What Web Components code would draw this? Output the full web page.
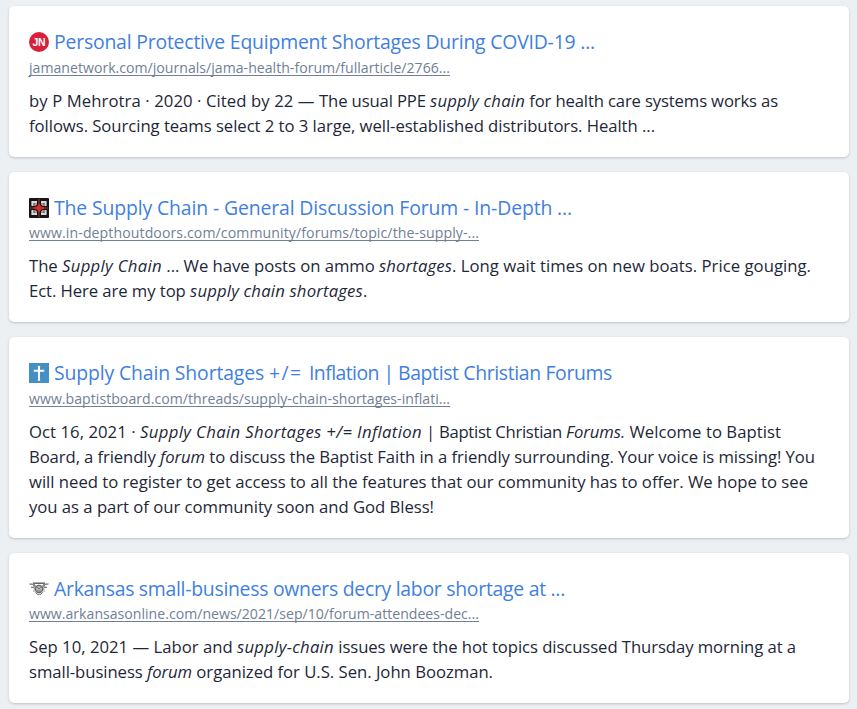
<!DOCTYPE html>
<html lang="en">
<head>
<meta charset="utf-8">
<title>Search results</title>
<style>
html{background:#ecf0f3}
body{margin:0;height:709px;overflow:hidden;background:#ecf0f3;font-family:"Open Sans","Noto Sans",sans-serif;font-weight:400;color:#1e2738}
</style>
</head>
<body>
<results-list>
  <result-card>
    <svg slot="icon" width="20" height="20" viewBox="0 0 20 20"><circle cx="10" cy="10" r="10" fill="#d9203b"/><text x="10" y="14" text-anchor="middle" font-family="Liberation Sans" font-size="10.5" font-weight="700" fill="#fff" textLength="13">JN</text></svg>
    <text-run slot="title" w="541">Personal Protective Equipment Shortages During COVID-19 ...</text-run>
    <text-run slot="url" w="421">jamanetwork.com/journals/jama-health-forum/fullarticle/2766...</text-run>
    <text-line><text-run w="290">by P Mehrotra · 2020 · Cited by 22 — </text-run><text-run w="111">The usual PPE </text-run><text-run italic w="95">supply chain</text-run><text-run w="253"> for health care systems works as</text-run></text-line>
    <text-line><text-run w="626">follows. Sourcing teams select 2 to 3 large, well-established distributors. Health ...</text-run></text-line>
  </result-card>
  <result-card>
    <svg slot="icon" width="20" height="20" viewBox="0 0 20 20"><rect width="20" height="20" rx="1" fill="#161616"/><path d="M3.5 8V4H8M12 4H16.5V8M16.5 12V16H12M8 16H3.5V12" fill="none" stroke="#ddd6d3" stroke-width="2.2"/><path d="M6 8V6H8M12 6H14V8M14 12V14H12M8 14H6V12" fill="none" stroke="#c9b9b5" stroke-width="1.3"/><path d="M10 1V19M1 10H19" stroke="#702323" stroke-width="1.8"/><path d="M10 6L11.5 8.5L15 10L11.5 11.5L10 14L8.5 11.5L5 10L8.5 8.5Z" fill="#cf3028" stroke="#cf3028"/></svg>
    <text-run slot="title" w="518">The Supply Chain - General Discussion Forum - In-Depth ...</text-run>
    <text-run slot="url" w="450">www.in-depthoutdoors.com/community/forums/topic/the-supply-...</text-run>
    <text-line><text-run w="33">The </text-run><text-run italic w="100">Supply Chain</text-run><text-run w="217"> ... We have posts on ammo </text-run><text-run italic w="73">shortages</text-run><text-run w="359">. Long wait times on new boats. Price gouging.</text-run></text-line>
    <text-line><text-run w="161">Ect. Here are my top </text-run><text-run italic w="173">supply chain shortages</text-run><text-run w="4">.</text-run></text-line>
  </result-card>
  <result-card>
    <svg slot="icon" width="20" height="20" viewBox="0 0 20 20"><rect width="20" height="20" fill="#468fc5"/><path d="M10 3V17.5M5.5 7.7H14.5" stroke="#fff" stroke-width="2"/><path d="M8.7 3.3H11.3M8.7 17.3H11.3M5.2 6.5V9M14.8 6.5V9" stroke="#fff" stroke-opacity=".75"/></svg>
    <text-line slot="title"><text-run w="215">Supply Chain Shortages </text-run><text-run w="40">+/= </text-run><text-run w="89">Inflation | </text-run><text-run w="214">Baptist Christian Forums</text-run></text-line>
    <text-run slot="url" w="421">www.baptistboard.com/threads/supply-chain-shortages-inflati...</text-run>
    <text-line><text-run w="111">Oct 16, 2021 · </text-run><text-run italic w="282">Supply Chain Shortages +/= Inflation</text-run><text-run w="144"> | Baptist Christian </text-run><text-run italic w="59">Forums.</text-run><text-run w="156"> Welcome to Baptist</text-run></text-line>
    <text-line><text-run w="131">Board, a friendly </text-run><text-run italic w="45">forum</text-run><text-run w="610"> to discuss the Baptist Faith in a friendly surrounding. Your voice is missing! You</text-run></text-line>
    <text-line><text-run w="779">will need to register to get access to all the features that our community has to offer. We hope to see</text-run></text-line>
    <text-line><text-run w="405">you as a part of our community soon and God Bless!</text-run></text-line>
  </result-card>
  <result-card>
    <svg slot="icon" width="20" height="20" viewBox="0 0 20 20" fill="none" stroke="#666"><path d="M4 4.2H16" stroke="#555" stroke-width="1.4"/><path d="M.5 5L6 5.5M19.5 5L14 5.5" stroke="#888" stroke-width="1.4"/><path d="M2 8.3H6M18 8.3H14M4 6.6L7 7.2M16 6.6L13 7.2" stroke="#777" stroke-width="1.3"/><path d="M5.5 8L4.8 13M14.5 8L15.2 13" stroke="#aaa" stroke-width="1.2"/><circle cx="10" cy="10" r="3.6" fill="#b5b5b5" stroke="#666" stroke-width="1.3"/><path d="M8 8L10 10L12 8M8 12H12M6.5 13L8 15.3H12L13.5 13" stroke="#777"/></svg>
    <text-run slot="title" w="511">Arkansas small-business owners decry labor shortage at ...</text-run>
    <text-run slot="url" w="450">www.arkansasonline.com/news/2021/sep/10/forum-attendees-dec...</text-run>
    <text-line><text-run w="208">Sep 10, 2021 — Labor and </text-run><text-run italic w="97">supply-chain</text-run><text-run w="462"> issues were the hot topics discussed Thursday morning at a</text-run></text-line>
    <text-line><text-run w="118">small-business </text-run><text-run italic w="45">forum</text-run><text-run w="301"> organized for U.S. Sen. John Boozman.</text-run></text-line>
  </result-card>
</results-list>
<script>
const attach=(el,html)=>{el.attachShadow({mode:'open'}).innerHTML=html};

// Stack of result cards.
customElements.define('results-list',class extends HTMLElement{
  constructor(){super();attach(this,`<style>:host{display:flex;flex-direction:column;gap:15px;padding:6px 8px 6px 9px}</style><slot></slot>`)}
});

// One result: icon and title, address, then the excerpt lines.
customElements.define('result-card',class extends HTMLElement{
  constructor(){super();attach(this,`<style>
:host{display:block;box-sizing:border-box;padding:22px 20px 19.1px;background:#fff;border-radius:5px;box-shadow:0 1px 3px rgba(0,0,0,.12),0 1px 2px rgba(0,0,0,.08)}
.head{display:flex;align-items:center;gap:5px;height:28px;font-size:19.4px;line-height:28px;color:#3f7fe0}
.head slot[name=title]{display:block;height:28px}
.url{display:flex;height:20px;line-height:20px;font-size:14.1px;color:#718096;margin:1.5px 0 10px}
.body{font-size:16.7px;line-height:25px}
::slotted(svg){display:block;flex:none}
</style><div class="head"><slot name="icon"></slot><slot name="title"></slot></div><div class="url"><slot name="url"></slot></div><div class="body"><slot></slot></div>`)}
});

customElements.define('text-line',class extends HTMLElement{
  constructor(){super();attach(this,`<style>:host{display:flex;height:25px;white-space:pre}</style><slot></slot>`)}
});

// Text whose tracking is adjusted so that it occupies the width in "w".
customElements.define('text-run',class extends HTMLElement{
  constructor(){super();attach(this,`<style>:host{display:block;flex:none;white-space:pre}:host([italic]){font-style:italic}:host([slot=url]) span{text-decoration:underline;text-underline-offset:2px;text-decoration-thickness:1px;text-decoration-skip-ink:none}</style><span><slot></slot></span>`)}
  connectedCallback(){
    const w=+this.getAttribute('w'),span=this.shadowRoot.querySelector('span');
    const natural=span.getBoundingClientRect().width;
    span.style.letterSpacing=(w-natural)/[...this.textContent].length+'px';
    this.style.width=w+'px';
  }
});
</script>
</body>
</html>
